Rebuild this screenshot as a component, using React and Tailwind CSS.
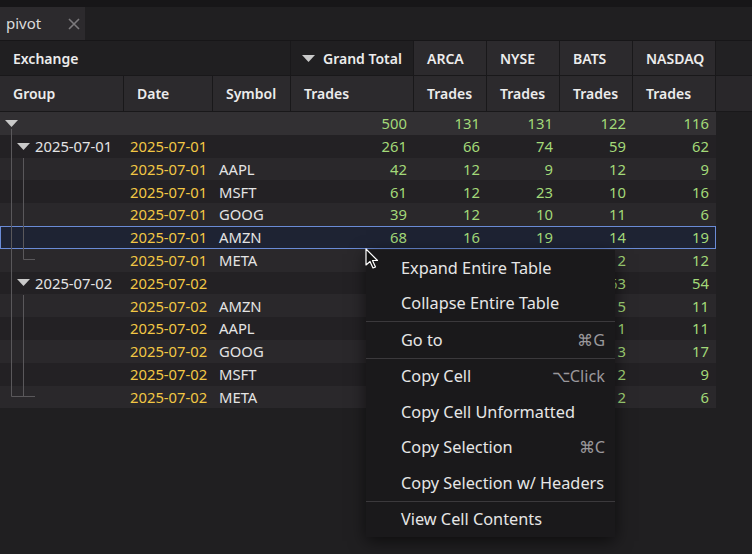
import React from 'react';

const cols = 'grid grid-cols-[124px_89px_78px_123px_73px_73px_73px_83px]';

const rows = [
  { kind: 'total', vals: [500, 131, 131, 122, 116] },
  { kind: 'group', group: '2025-07-01', date: '2025-07-01', vals: [261, 66, 74, 59, 62] },
  { date: '2025-07-01', sym: 'AAPL', vals: [42, 12, 9, 12, 9] },
  { date: '2025-07-01', sym: 'MSFT', vals: [61, 12, 23, 10, 16] },
  { date: '2025-07-01', sym: 'GOOG', vals: [39, 12, 10, 11, 6] },
  { date: '2025-07-01', sym: 'AMZN', vals: [68, 16, 19, 14, 19], selected: true },
  { date: '2025-07-01', sym: 'META', vals: [61, 18, 19, 12, 12] },
  { kind: 'group', group: '2025-07-02', date: '2025-07-02', vals: [239, 65, 57, 63, 54] },
  { date: '2025-07-02', sym: 'AMZN', vals: [51, 12, 13, 15, 11] },
  { date: '2025-07-02', sym: 'AAPL', vals: [44, 11, 11, 11, 11] },
  { date: '2025-07-02', sym: 'GOOG', vals: [55, 12, 13, 13, 17] },
  { date: '2025-07-02', sym: 'MSFT', vals: [42, 10, 11, 12, 9] },
  { date: '2025-07-02', sym: 'META', vals: [47, 10, 9, 12, 6] },
];

const Caret = ({ className }) => (
  <svg width="13" height="7" viewBox="0 0 13 7" className={className}>
    <path d="M0 0 L13 0 L6.5 7 Z" fill="#c9c9c9" />
  </svg>
);

const menu = [
  { label: 'Expand Entire Table' },
  { label: 'Collapse Entire Table' },
  { sep: true },
  { label: 'Go to', key: '⌘G' },
  { sep: true },
  { label: 'Copy Cell', key: '⌥Click' },
  { label: 'Copy Cell Unformatted' },
  { label: 'Copy Selection', key: '⌘C' },
  { label: 'Copy Selection w/ Headers' },
  { sep: true },
  { label: 'View Cell Contents' },
];

const Row = ({ row, index }) => {
  let bg = index % 2 === 0 ? 'bg-[#2a282b]' : 'bg-[#232124]';
  if (row.kind === 'total') bg = 'bg-[#323033]';
  if (row.selected) bg = 'bg-[#1e2333] outline outline-1 -outline-offset-1 outline-[#6a8bd6]';
  return (
    <div className={`${cols} h-[22.8px] w-[716px] items-center ${bg}`}>
      <div className="pl-[35px] text-[#e4e4e4]">{row.group || ''}</div>
      <div className="pl-[6px] text-[#f2c744]">{row.date || ''}</div>
      <div className="pl-[6px] text-[#e4e4e4]">{row.sym || ''}</div>
      {row.vals.map((v, i) => (
        <div key={i} className="pr-[7px] text-right text-[#a3d979]">
          {v}
        </div>
      ))}
    </div>
  );
};

export default function App() {
  return (
    <div className="relative w-[752px] h-[554px] overflow-hidden bg-[#201f21] text-[14.8px] font-['Noto_Sans','Open_Sans',sans-serif]">
      {/* tab strip */}
      <div className="h-[7px] bg-[#171618]" />
      <div className="flex h-[34px] border-b border-[#171618] bg-[#201f21]">
        <div className="flex w-[85px] items-center justify-between bg-[#2c2a2d] pl-[6px] pr-[5px]">
          <span className="text-[15px] text-[#dcdcdc]">pivot</span>
          <svg width="12" height="12" viewBox="0 0 12 12">
            <path d="M1 1 L11 11 M11 1 L1 11" stroke="#7c7a7d" strokeWidth="1.6" />
          </svg>
        </div>
      </div>

      {/* header row 1 */}
      <div className="flex h-[35px] bg-[#201f21] text-[14px] font-semibold text-[#ececec]">
        <div className={`${cols} w-[716px]`}>
          <div className="col-span-3 flex items-center border-r border-b border-[#19181a] pl-[13px]">Exchange</div>
          <div className="flex items-center gap-[8px] border-r border-b border-[#19181a] pl-[11px]">
            <Caret />
            <span>Grand Total</span>
          </div>
          {['ARCA', 'NYSE', 'BATS', 'NASDAQ'].map((h) => (
            <div key={h} className="flex items-center border-r border-b border-[#19181a] bg-[#2c2a2d] pl-[13px]">
              {h}
            </div>
          ))}
        </div>
        <div className="flex-1 border-b border-[#19181a] bg-[#222123]" />
      </div>

      {/* header row 2 */}
      <div className="flex h-[36px] text-[14px] font-semibold text-[#ececec]">
        <div className={`${cols} w-[716px]`}>
          {['Group', 'Date', 'Symbol', 'Trades', 'Trades', 'Trades', 'Trades', 'Trades'].map((h, i) => (
            <div key={i} className="flex items-center border-r border-b border-[#19181a] bg-[#2c2a2d] pl-[13px]">
              {h}
            </div>
          ))}
        </div>
        <div className="flex-1 border-b border-[#19181a] bg-[#29272a]" />
      </div>

      {/* body */}
      <div className="relative">
        {rows.map((r, i) => (
          <Row key={i} row={r} index={i} />
        ))}
        <svg className="absolute left-0 top-0" width="124" height="300" viewBox="0 0 124 300">
          <path d="M5 8 L18 8 L11.5 15 Z" fill="#c9c9c9" />
          <path d="M17 31 L30 31 L23.5 38 Z" fill="#c9c9c9" />
          <path d="M17 167 L30 167 L23.5 174 Z" fill="#c9c9c9" />
          <path d="M11.5 17 L11.5 284.5 L35 284.5" stroke="#5a585b" strokeWidth="1" fill="none" />
          <path d="M23.5 46 L23.5 147.5 L35 147.5" stroke="#5a585b" strokeWidth="1" fill="none" />
          <path d="M23.5 183 L23.5 284.5 L35 284.5" stroke="#5a585b" strokeWidth="1" fill="none" />
        </svg>
      </div>

      {/* context menu */}
      <div className="absolute left-[366px] top-[250px] w-[249px] bg-[#1a191b] text-[16.3px] text-[#e6e6e6] shadow-[0_4px_16px_rgba(0,0,0,0.6)]">
        {menu.map((m, i) =>
          m.sep ? (
            <div key={i} className="h-px bg-[#3b393c]" />
          ) : (
            <div key={i} className="flex h-[35.5px] items-center justify-between pl-[35px] pr-[10px]">
              <span>{m.label}</span>
              {m.key && <span className="text-[#9a989b]">{m.key}</span>}
            </div>
          )
        )}
      </div>

      {/* mouse pointer */}
      <svg className="absolute left-[365px] top-[248px]" width="14" height="22" viewBox="0 0 14 22">
        <path d="M1 1 L1 17 L5 13.5 L8 20 L10.5 19 L7.5 12.5 L12.5 12.5 Z" fill="#111" stroke="#fff" strokeWidth="1.2" strokeLinejoin="round" />
      </svg>
    </div>
  );
}
